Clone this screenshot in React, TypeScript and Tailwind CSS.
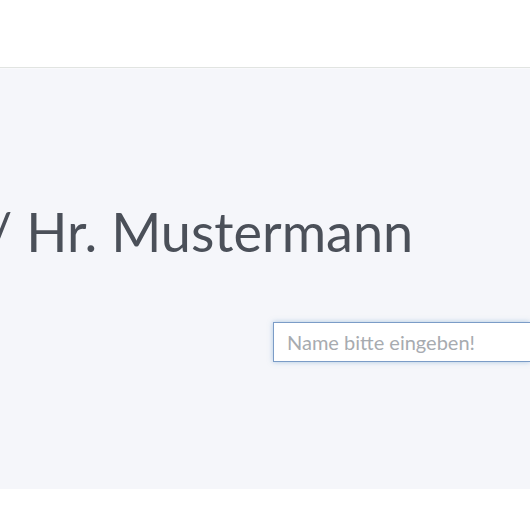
import React from 'react';

export default function App() {
  return (
    <div className="w-[530px] h-[530px] overflow-hidden bg-white font-['Lato',sans-serif]">
      {/* Kopfbereich */}
      <div className="h-[68px] bg-white border-b border-[#e1e4e1]" />

      {/* Inhalt */}
      <div className="h-[421px] bg-[#f5f6fa] border-t border-[#f9f9fc] flex flex-col overflow-hidden">
        <div className="pt-[136px] whitespace-nowrap overflow-hidden">
          <h1 className="-ml-[12px] text-[54px] leading-none text-[#4b5059] font-normal">
            / Hr. Mustermann
          </h1>
        </div>
        <div className="mt-[63px] flex">
          <input
            autoFocus
            placeholder="Name bitte eingeben!"
            className="ml-[273px] w-[257px] h-[40px] bg-white border border-r-0 border-[#7b9cc7] pl-[13px] text-[20px] text-[#4b5059] placeholder:text-[#a7abb0] outline-none shadow-[0_0_5px_rgba(102,153,204,0.5)]"
          />
        </div>
      </div>

      {/* Fußbereich */}
      <div className="h-[41px] bg-white" />
    </div>
  );
}
